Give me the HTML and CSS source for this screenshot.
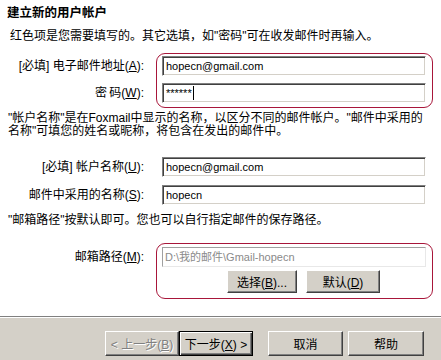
FILE: index.html
```html
<!DOCTYPE html>
<html lang="zh-CN">
<head>
    <meta charset="UTF-8">
    <meta name="viewport" content="width=device-width, initial-scale=1.0">
    <title>建立新的用户帐户</title>
    <link rel="stylesheet" href="styles.css">
</head>
<body>
    <div class="dialog">
        <div class="page">
            <h1 class="title">建立新的用户帐户</h1>
            <p class="intro">红色项是您需要填写的。其它选填，如"密码"可在收发邮件时再输入。</p>

            <div class="block">
                <div class="labels">
                    <label>[必填] 电子邮件地址(<u>A</u>):</label>
                    <label>密&thinsp;码(<u>W</u>):</label>
                </div>
                <div class="box required">
                    <div class="field">hopecn@gmail.com</div>
                    <div class="field">******<span class="caret"></span></div>
                </div>
            </div>

            <p class="note">"帐户名称"是在Foxmail中显示的名称，以区分不同的邮件帐户。"邮件中采用的<br>名称"可填您的姓名或昵称，将包含在发出的邮件中。</p>

            <div class="block">
                <div class="labels wide">
                    <label>[必填] 帐户名称(<u>U</u>):</label>
                    <label>邮件中采用的名称(<u>S</u>):</label>
                </div>
                <div class="box plain">
                    <div class="field">hopecn@gmail.com</div>
                    <div class="field">hopecn</div>
                </div>
            </div>

            <p class="note">"邮箱路径"按默认即可。您也可以自行指定邮件的保存路径。</p>

            <div class="block path">
                <div class="labels">
                    <label>邮箱路径(<u>M</u>):</label>
                </div>
                <div class="box required">
                    <div class="field disabled">D:\我的邮件\Gmail-hopecn</div>
                    <div class="path-buttons">
                        <button class="btn small">选择(<u>B</u>)...</button>
                        <button class="btn small wider">默认(<u>D</u>)</button>
                    </div>
                </div>
            </div>
        </div>

        <div class="footer">
            <button class="btn" disabled>&lt; 上一步(<u>B</u>)</button>
            <button class="btn default">下一步(<u>X</u>) &gt;</button>
            <button class="btn cancel">取消</button>
            <button class="btn help">帮助</button>
        </div>
    </div>
</body>
</html>
```

FILE: styles.css
```css
body {
    margin: 0;
    font-family: 'Liberation Sans', 'Noto Sans CJK SC', sans-serif;
    font-size: 12px;
    color: #000;
    background: #fff;
}
.dialog {
    width: 441px;
    height: 360px;
    display: flex;
    flex-direction: column;
    overflow: hidden;
}
.page {
    height: 316px;
    background: #fff;
    display: flex;
    flex-direction: column;
}
.title {
    margin: 0;
    padding: 6px 0 0 7px;
    font-size: 12.5px;
    line-height: 14px;
    font-weight: bold;
}
.intro {
    margin: 10px 0 0;
    padding-left: 10px;
    line-height: 13px;
    white-space: nowrap;
}
.note {
    margin: 4px 0 0;
    padding-left: 8px;
    line-height: 13px;
    white-space: nowrap;
}

/* label column + field box */
.block {
    display: flex;
    margin-top: 10px;
}
.block + .note + .block {
    margin-top: 16px;
}
.block.path {
    margin-top: 13px;
}
.labels {
    width: 144px;
    padding-top: 3px;
    display: flex;
    flex-direction: column;
    align-items: flex-end;
    gap: 7px;
}
.labels label {
    line-height: 20px;
    white-space: nowrap;
}
.labels.wide {
    gap: 8px;
}
.path .labels {
    padding-top: 4px;
}
.box {
    margin-left: 12px;
    width: 277px;
    box-sizing: border-box;
    padding: 2px 6px 4px 5px;
    border: 1px solid transparent;
    border-radius: 9px;
    display: flex;
    flex-direction: column;
    gap: 7px;
}
.box.required {
    border-color: #a8163a;
}
.box.plain {
    gap: 8px;
}
.path .box {
    padding: 3px 6px 5px 5px;
    gap: 3px;
}

/* sunken edit */
.field {
    height: 20px;
    box-sizing: border-box;
    padding: 0 3px;
    line-height: 17px;
    font-size: 11px;
    border: 1px solid;
    border-color: #808080 #fff #fff #808080;
    box-shadow: inset 1px 1px #404040, inset -1px -1px #d4d0c8;
    background: #fff;
    white-space: nowrap;
    overflow: hidden;
    display: flex;
    align-items: center;
}
.field.disabled {
    color: #8a8a8a;
    border-color: #a0a0a0 #e8e8e8 #e8e8e8 #a0a0a0;
    box-shadow: none;
    padding-left: 2px;
}
.caret {
    display: inline-block;
    width: 1px;
    height: 14px;
    margin-left: 1px;
    background: #000;
}

.path-buttons {
    display: flex;
    gap: 9px;
    margin-left: 65px;
}

/* raised button */
.btn {
    font-family: inherit;
    font-size: 12px;
    color: #000;
    height: 25px;
    width: 74px;
    padding: 0;
    background: #d4d0c8;
    border: 1px solid;
    border-color: #fff #404040 #404040 #fff;
    box-shadow: inset -1px -1px #808080;
    border-radius: 0;
    white-space: nowrap;
}
.btn.small {
    height: 23px;
    width: 70px;
}
.btn.small.wider {
    width: 74px;
}
.btn:disabled {
    color: #808080;
    text-shadow: 1px 1px #fff;
}
.btn.default {
    border: 1px solid #000;
    box-shadow: inset 1px 1px #fff, inset -1px -1px #404040, inset -2px -2px #808080;
}
.btn.cancel {
    width: 75px;
    margin-left: 15px;
}
.btn.help {
    width: 76px;
    margin-left: 5px;
}

.footer {
    flex: 1;
    background: #d4d0c8;
    border-top: 1px solid #808080;
    box-shadow: inset 0 1px #fff;
    display: flex;
    align-items: flex-start;
    padding: 14px 0 0 105px;
}
```
